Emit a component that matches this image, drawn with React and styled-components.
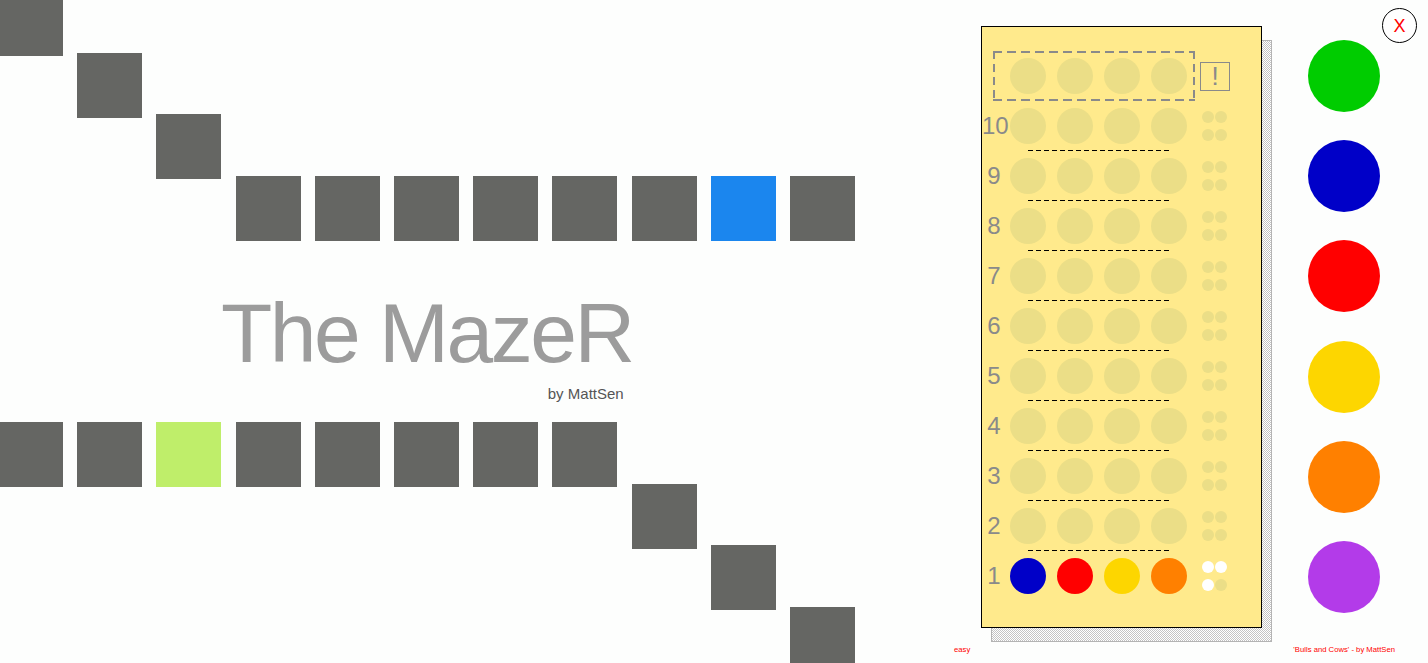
import React from "react";
import styled, { createGlobalStyle, css } from "styled-components";

const GlobalStyle = createGlobalStyle`
  html, body {
    margin: 0;
    padding: 0;
    width: 100%;
    height: 100%;
    overflow: hidden;
    background: #fdfefd;
    font-family: "Liberation Sans", Arial, sans-serif;
  }
`;

const COL = 79.2;
const ROW = 61.6;

const Page = styled.div`
  width: 1428px;
  height: 663px;
  overflow: hidden;
  display: grid;
  grid-template-columns: 954px 1fr;
`;

const Maze = styled.div`
  display: grid;
  grid-template-columns: repeat(11, ${COL}px);
  grid-template-rows: repeat(11, ${ROW}px);
  margin: -9px 0 0 -2px;
  align-self: start;
`;

const tileColors = {
  wall: "#656663",
  player: "#1b86ee",
  goal: "#bfee6a",
};

const Tile = styled.div`
  grid-column: ${(p) => p.$col + 1};
  grid-row: ${(p) => p.$row + 1};
  width: 65px;
  height: 65px;
  align-self: start;
  justify-self: start;
  background: ${(p) => tileColors[p.$kind]};
`;

const TitleBlock = styled.div`
  grid-column: 1 / -1;
  grid-row: 5 / 8;
  align-self: start;
  justify-self: start;
  margin: 53.5px 0 0 223px;
  display: flex;
  flex-direction: column;
  align-items: flex-end;
  width: max-content;
`;

const Title = styled.h1`
  margin: 0;
  font-weight: normal;
  font-size: 84px;
  line-height: 1;
  letter-spacing: -2.5px;
  color: #9c9c9c;
`;

const Byline = styled.div`
  margin: 11px 9px 0 0;
  font-size: 15px;
  line-height: 1;
  color: #555;
`;

const Side = styled.div`
  position: relative;
  display: flex;
  flex-direction: column;
`;

const TopRow = styled.div`
  display: flex;
  align-items: flex-start;
  padding: 26px 0 0 27px;
`;

const BoardWrap = styled.div`
  position: relative;
  isolation: isolate;
`;

const Board = styled.div`
  position: relative;
  width: 281px;
  height: 602px;
  box-sizing: border-box;
  border: 1px solid #000;
  background: #ffea8c;
  padding-top: 24px;
  display: flex;
  flex-direction: column;

  &::before {
    content: "";
    position: absolute;
    left: 9px;
    top: 13px;
    width: 281px;
    height: 602px;
    box-sizing: border-box;
    border: 1px solid #b4b4b4;
    background-color: #fff;
    background-image: conic-gradient(#c4c4c4 25%, #fff 0 50%, #c4c4c4 0 75%, #fff 0);
    background-size: 2px 2px;
    z-index: -1;
  }
`;

const SecretRow = styled.div`
  display: flex;
  align-items: center;
  height: 50px;
`;

const dashH = "repeating-linear-gradient(90deg, #8a8a8a 0 9px, transparent 9px 14px)";
const dashV = "repeating-linear-gradient(180deg, #8a8a8a 0 8px, transparent 8px 13px)";

const SecretBox = styled.div`
  margin-left: 11px;
  width: 202px;
  height: 50px;
  box-sizing: border-box;
  padding: 0 0 0 17px;
  display: flex;
  align-items: center;
  gap: 11px;
  background:
    ${dashH} top left / 100% 2px no-repeat,
    ${dashH} bottom left / 100% 2px no-repeat,
    ${dashV} top left / 2px 100% no-repeat,
    ${dashV} top right / 2px 100% no-repeat;
`;

const HintBox = styled.div`
  margin-left: 5px;
  width: 30px;
  height: 29px;
  box-sizing: border-box;
  border: 1px solid #8a8a8a;
  display: flex;
  align-items: center;
  justify-content: center;
  font-size: 26px;
  line-height: 1;
  color: #8a8a8a;
`;

const GuessRow = styled.div`
  display: flex;
  flex-direction: column;
  height: 50px;
`;

const RowMain = styled.div`
  display: flex;
  align-items: center;
  height: 49px;
`;

const RowNumber = styled.div`
  width: 24px;
  text-align: center;
  font-size: 24px;
  line-height: 1;
  color: #8a8a8a;
`;

const Pegs = styled.div`
  display: flex;
  gap: 11px;
  margin-left: 4px;
`;

const Peg = styled.div`
  width: 36px;
  height: 36px;
  border-radius: 50%;
  background: ${(p) => p.$color || "#ebde87"};
`;

const Keys = styled.div`
  margin-left: 15px;
  display: grid;
  grid-template-columns: 12px 12px;
  column-gap: 1px;
  row-gap: 6px;
`;

const KeyPeg = styled.div`
  width: 12px;
  height: 12px;
  border-radius: 50%;
  background: ${(p) => (p.$white ? "#fff" : "#ebde87")};
`;

const Separator = styled.div`
  margin-left: 46px;
  width: 141px;
  height: 1px;
  background: repeating-linear-gradient(90deg, #000 0 5px, transparent 5px 8px);
`;

const Palette = styled.div`
  margin: 14px 0 0 46px;
  display: flex;
  flex-direction: column;
  gap: 28.2px;
`;

const Swatch = styled.div`
  width: 72px;
  height: 72px;
  border-radius: 50%;
  background: ${(p) => p.$color};
  cursor: pointer;
`;

const Footer = styled.div`
  display: flex;
  justify-content: space-between;
  margin-top: 18px;
  padding-right: 33px;
  font-size: 7.7px;
  line-height: 1;
  color: #ff0000;
`;

const CloseButton = styled.button`
  position: absolute;
  top: 8px;
  right: 11px;
  width: 35px;
  height: 35px;
  box-sizing: border-box;
  padding: 0;
  border: 1px solid #000;
  border-radius: 50%;
  background: #fff;
  color: #ff0000;
  font-family: "Liberation Sans", Arial, sans-serif;
  font-size: 18px;
  line-height: 1;
  display: flex;
  align-items: center;
  justify-content: center;
`;

const tiles = [
  [0, 0], [1, 1], [2, 2],
  [3, 3], [4, 3], [5, 3], [6, 3], [7, 3], [8, 3], [9, 3, "player"], [10, 3],
  [0, 7], [1, 7], [2, 7, "goal"], [3, 7], [4, 7], [5, 7], [6, 7], [7, 7],
  [8, 8], [9, 9], [10, 10],
];

const C = {
  green: "#00cc00",
  blue: "#0000c8",
  red: "#ff0000",
  yellow: "#fdd600",
  orange: "#ff8000",
  purple: "#b33be9",
};

const rows = [10, 9, 8, 7, 6, 5, 4, 3, 2, 1].map((n) =>
  n === 1
    ? { n, pegs: [C.blue, C.red, C.yellow, C.orange], keys: [true, true, true, false] }
    : { n, pegs: [null, null, null, null], keys: [false, false, false, false] }
);

export default function App() {
  return (
    <>
      <GlobalStyle />
      <Page>
        <Maze>
          {tiles.map(([c, r, k], i) => (
            <Tile key={i} $col={c} $row={r} $kind={k || "wall"} />
          ))}
          <TitleBlock>
            <Title>The MazeR</Title>
            <Byline>by MattSen</Byline>
          </TitleBlock>
        </Maze>
        <Side>
          <TopRow>
            <BoardWrap>
              <Board>
                <SecretRow>
                  <SecretBox>
                    {[0, 1, 2, 3].map((i) => (
                      <Peg key={i} />
                    ))}
                  </SecretBox>
                  <HintBox>!</HintBox>
                </SecretRow>
                {rows.map((row) => (
                  <GuessRow key={row.n}>
                    <RowMain>
                      <RowNumber>{row.n}</RowNumber>
                      <Pegs>
                        {row.pegs.map((c, i) => (
                          <Peg key={i} $color={c} />
                        ))}
                      </Pegs>
                      <Keys>
                        {row.keys.map((w, i) => (
                          <KeyPeg key={i} $white={w} />
                        ))}
                      </Keys>
                    </RowMain>
                    {row.n !== 1 && <Separator />}
                  </GuessRow>
                ))}
              </Board>
            </BoardWrap>
            <Palette>
              {[C.green, C.blue, C.red, C.yellow, C.orange, C.purple].map((c) => (
                <Swatch key={c} $color={c} />
              ))}
            </Palette>
          </TopRow>
          <Footer>
            <span>easy</span>
            <span>'Bulls and Cows' - by MattSen</span>
          </Footer>
          <CloseButton>X</CloseButton>
        </Side>
      </Page>
    </>
  );
}
